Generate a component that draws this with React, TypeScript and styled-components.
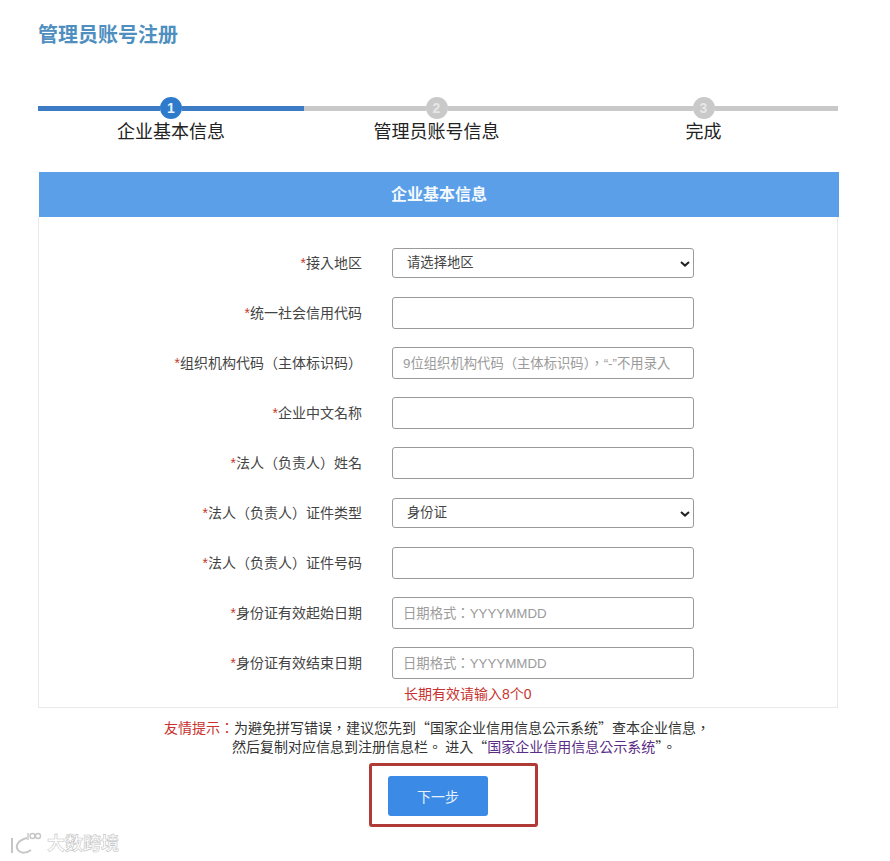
import React from "react";
import styled, { createGlobalStyle } from "styled-components";

const GlobalStyle = createGlobalStyle`
    html, body {
        margin: 0;
        padding: 0;
        background: #fff;
    }
    body {
        font-family: "Liberation Sans", "Noto Sans CJK SC", sans-serif;
        font-size: 14px;
        color: #333;
    }
`;

const formFont = `"Liberation Sans", "Noto Sans CJK TC", sans-serif`;
const chevron = `url("data:image/svg+xml,%3Csvg xmlns='http://www.w3.org/2000/svg' width='10' height='6' viewBox='0 0 10 6'%3E%3Cpath d='M1 1l4 3.6L9 1' fill='none' stroke='%23222' stroke-width='2'/%3E%3C/svg%3E")`;

const Page = styled.div`
    position: relative;
    width: 890px;
    height: 861px;
    box-sizing: border-box;
    padding: 21px 52px 0 38px;
    overflow: hidden;
`;

const Title = styled.h1`
    margin: 0;
    height: 76px;
    font-size: 20px;
    line-height: 28px;
    font-weight: 700;
    color: #4f8fc0;
`;

const Stepper = styled.div`
    display: grid;
    grid-template-columns: 266px 265px 269px;
    height: 75px;
`;

const Step = styled.div`
    display: flex;
    flex-direction: column;
    align-items: stretch;
`;

const Track = styled.div`
    display: flex;
    align-items: center;
    height: 22px;
`;

const Segment = styled.div<{ $active?: boolean }>`
    flex: 1;
    height: 5px;
    background: ${(props) => (props.$active ? "#3d7cc4" : "#c9c9c9")};
`;

const Dot = styled.div<{ $active?: boolean }>`
    width: 22px;
    height: 22px;
    border-radius: 50%;
    background: ${(props) => (props.$active ? "#2e7bcb" : "#c9c9c9")};
    color: ${(props) => (props.$active ? "#e8f1fb" : "#e6e6e6")};
    font-size: 14px;
    font-weight: 700;
    line-height: 22px;
    text-align: center;
`;

const StepLabel = styled.div`
    font-size: 18px;
    line-height: 26px;
    text-align: center;
    color: #222;
`;

const PanelHeader = styled.div`
    height: 45px;
    margin: 0 -1px 0 1px;
    background: #5a9fe8;
    color: #f4f9fe;
    font-size: 16px;
    font-weight: 700;
    line-height: 45px;
    text-align: center;
`;

const Panel = styled.div`
    box-sizing: border-box;
    height: 491px;
    padding-top: 21px;
    border: 1px solid #e9e9e9;
    border-top: none;
`;

const FormRow = styled.div`
    display: grid;
    grid-template-columns: 323px 302px;
    column-gap: 30px;
    align-items: center;
    height: 50px;
`;

const Label = styled.label`
    padding-bottom: 2px;
    font-family: ${formFont};
    text-align: right;
    color: #444;
    white-space: nowrap;
`;

const Star = styled.span`
    color: #c0392b;
`;

const Select = styled.select`
    appearance: none;
    box-sizing: border-box;
    width: 302px;
    height: 30px;
    padding: 0 0 2px 14px;
    border: 1px solid #9a9a9a;
    border-radius: 3px;
    background: #fff ${chevron} no-repeat 287px 12px;
    color: #444;
    font-family: ${formFont};
    font-size: 13.33px;
`;

const Input = styled.input`
    box-sizing: border-box;
    width: 302px;
    height: 32px;
    padding: 0 10px;
    border: 1px solid #9a9a9a;
    border-radius: 3px;
    background: #fff;
    font-family: ${formFont};
    font-size: 13.33px;
    &::placeholder {
        color: #9b9b9b;
        opacity: 1;
    }
`;

const Hint = styled.div`
    margin: -1px 0 0 365px;
    line-height: 14px;
    color: #c8332f;
`;

const Notice = styled.div`
    display: flex;
    margin-top: 10px;
    padding-left: 126px;
    font-family: "Noto Sans CJK TC", sans-serif;
    line-height: 19px;
    color: #333;
`;

const NoticeLabel = styled.span`
    color: #c8332f;
`;

const NoticeBody = styled.div`
    white-space: nowrap;
`;

const NoticeLine = styled.div<{ $outdent?: boolean }>`
    margin-left: ${(props) => (props.$outdent ? "-2px" : "0")};
`;

const NoticeLink = styled.a`
    color: #5b2d86;
    text-decoration: none;
`;

const Actions = styled.div`
    margin: 7px 0 0 331px;
`;

const Highlight = styled.div`
    box-sizing: border-box;
    width: 169px;
    height: 64px;
    padding: 10px 0 0 16px;
    border: 3px solid #b03a36;
    border-radius: 3px;
`;

const NextButton = styled.button`
    display: block;
    width: 100px;
    height: 40px;
    border: none;
    border-radius: 3px;
    background: #3a8ae6;
    color: #e8f2fd;
    font: inherit;
`;

const Watermark = styled.div`
    position: absolute;
    left: 8px;
    bottom: 4px;
    display: flex;
    align-items: center;
    gap: 5px;
    color: #fff;
    font-size: 18px;
    font-weight: 700;
    line-height: 26px;
    -webkit-text-stroke: 0.6px #c4c4c4;
`;

const fields = [
    { label: "接入地区", kind: "select", value: "请选择地区" },
    { label: "统一社会信用代码", kind: "input" },
    { label: "组织机构代码（主体标识码）", kind: "input", placeholder: "9位组织机构代码（主体标识码），“-”不用录入" },
    { label: "企业中文名称", kind: "input" },
    { label: "法人（负责人）姓名", kind: "input" },
    { label: "法人（负责人）证件类型", kind: "select", value: "身份证" },
    { label: "法人（负责人）证件号码", kind: "input" },
    { label: "身份证有效起始日期", kind: "input", placeholder: "日期格式：YYYYMMDD" },
    { label: "身份证有效结束日期", kind: "input", placeholder: "日期格式：YYYYMMDD" },
];

const steps = ["企业基本信息", "管理员账号信息", "完成"];

function WatermarkLogo(): JSX.Element {
    return (
        <svg width="34" height="26" viewBox="0 0 34 26" fill="none" stroke="#c6c6c6" strokeWidth="2">
            <path d="M4 7v15" />
            <path d="M19 7C10 9 7 15 10 19c3 4 9 3 13 0" />
            <path d="M20 2v7" strokeWidth="1.4" />
            <circle cx="24.5" cy="5" r="2.5" strokeWidth="1.4" />
            <circle cx="30" cy="5" r="2.5" strokeWidth="1.4" />
        </svg>
    );
}

export default function App(): JSX.Element {
    return (
        <Page>
            <GlobalStyle />
            <Title>管理员账号注册</Title>

            <Stepper>
                {steps.map((step, index) => (
                    <Step key={step}>
                        <Track>
                            <Segment $active={index === 0} />
                            <Dot $active={index === 0}>{index + 1}</Dot>
                            <Segment $active={index === 0} />
                        </Track>
                        <StepLabel>{step}</StepLabel>
                    </Step>
                ))}
            </Stepper>

            <PanelHeader>企业基本信息</PanelHeader>
            <Panel>
                {fields.map((field) => (
                    <FormRow key={field.label}>
                        <Label><Star>*</Star>{field.label}</Label>
                        {field.kind === "select" ? (
                            <Select defaultValue={field.value}>
                                <option>{field.value}</option>
                            </Select>
                        ) : (
                            <Input placeholder={field.placeholder} />
                        )}
                    </FormRow>
                ))}
                <Hint>长期有效请输入8个0</Hint>
            </Panel>

            <Notice>
                <NoticeLabel>友情提示：</NoticeLabel>
                <NoticeBody>
                    <NoticeLine>为避免拼写错误，建议您先到“国家企业信用信息公示系统”查本企业信息，</NoticeLine>
                    <NoticeLine $outdent>然后复制对应信息到注册信息栏。 进入“<NoticeLink href="#">国家企业信用信息公示系统</NoticeLink>”。</NoticeLine>
                </NoticeBody>
            </Notice>

            <Actions>
                <Highlight>
                    <NextButton type="button">下一步</NextButton>
                </Highlight>
            </Actions>

            <Watermark>
                <WatermarkLogo />
                大数跨境
            </Watermark>
        </Page>
    );
}
